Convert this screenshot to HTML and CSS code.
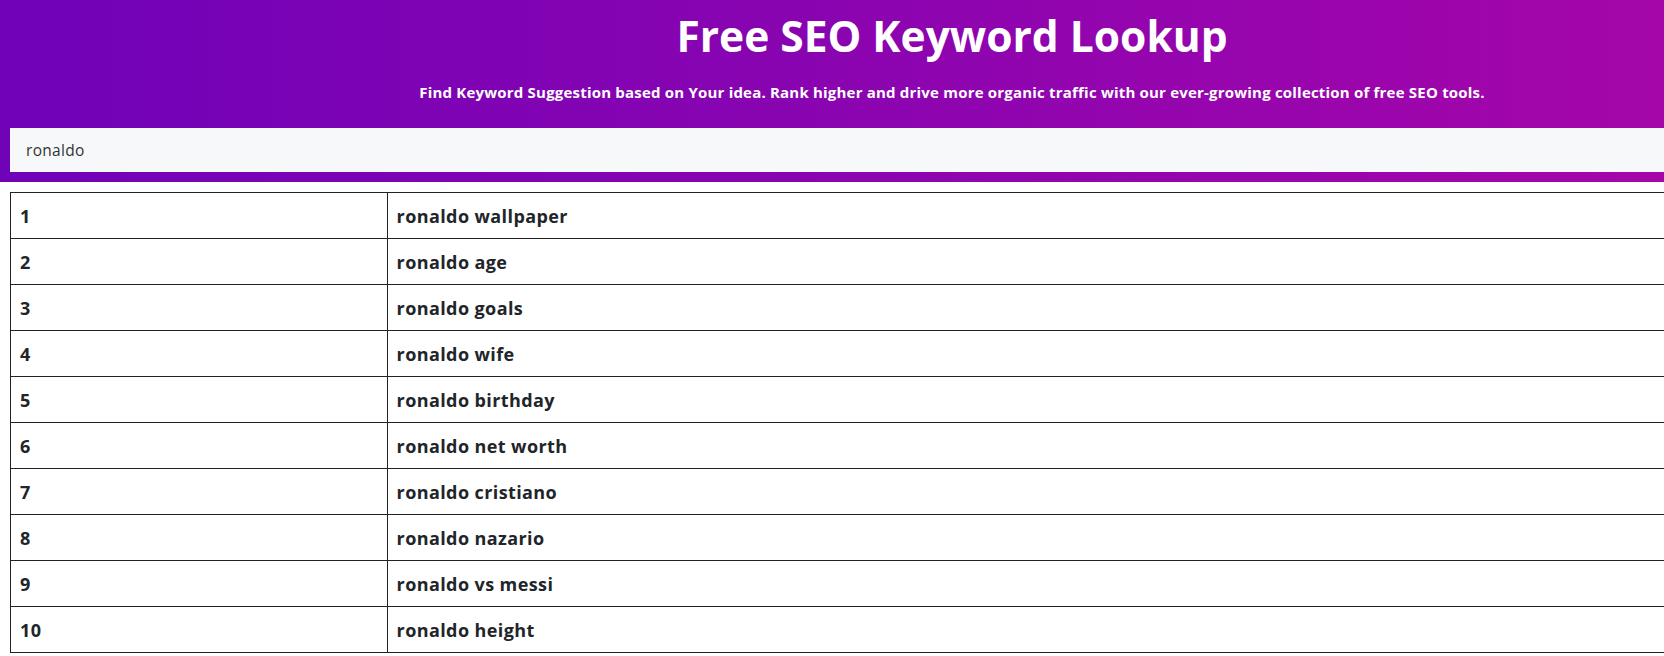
FILE: index.html
```html
<!DOCTYPE html>
<html lang="en">
<head>
<meta charset="utf-8">
<title>Free SEO Keyword Lookup</title>
<link rel="stylesheet" href="styles.css">
</head>
<body>
<div class="page">
  <header class="hero">
    <h1 class="hero-title">Free SEO Keyword Lookup</h1>
    <p class="hero-sub">Find Keyword Suggestion based on Your idea. Rank higher and drive more organic traffic with our ever-growing collection of free SEO tools.</p>
    <div class="search">
      <input class="search-input" type="text" value="ronaldo">
    </div>
  </header>
  <main class="results">
    <table class="kw-table">
      <tbody>
        <tr><td class="num">1</td><td class="kw">ronaldo wallpaper</td></tr>
        <tr><td class="num">2</td><td class="kw">ronaldo age</td></tr>
        <tr><td class="num">3</td><td class="kw">ronaldo goals</td></tr>
        <tr><td class="num">4</td><td class="kw">ronaldo wife</td></tr>
        <tr><td class="num">5</td><td class="kw">ronaldo birthday</td></tr>
        <tr><td class="num">6</td><td class="kw">ronaldo net worth</td></tr>
        <tr><td class="num">7</td><td class="kw">ronaldo cristiano</td></tr>
        <tr><td class="num">8</td><td class="kw">ronaldo nazario</td></tr>
        <tr><td class="num">9</td><td class="kw">ronaldo vs messi</td></tr>
        <tr><td class="num">10</td><td class="kw">ronaldo height</td></tr>
      </tbody>
    </table>
  </main>
</div>
</body>
</html>
```

FILE: styles.css
```css
* { box-sizing: border-box; }
html, body { margin: 0; padding: 0; background: #fff; }
body { font-family: "Open Sans", "DejaVu Sans", sans-serif; color: #212529; }
.page { width: 1904px; }
.hero {
  background: linear-gradient(90deg, #7002b8 0%, #a406a9 87%, #b008a8 100%);
  padding: 11px 10px 10px;
  text-align: center;
}
.hero-title {
  margin: 0;
  font-size: 42.5px;
  line-height: 50px;
  font-weight: 700;
  color: #fff;
}
.hero-sub {
  margin: 19px 0 0;
  font-size: 15px;
  line-height: 24px;
  letter-spacing: 0.2px;
  font-weight: 700;
  color: #fff;
}
.search { margin-top: 24px; }
.search-input {
  display: block;
  width: 100%;
  height: 44px;
  border: 0;
  outline: none;
  background: #f7f8fa;
  padding: 0 16px;
  font-family: "Open Sans", "DejaVu Sans", sans-serif;
  font-size: 15.5px;
  letter-spacing: 0.3px;
  color: #333;
}
.results { padding: 10px 10px; }
.kw-table {
  width: 100%;
  border-collapse: collapse;
}
.kw-table td {
  border: 1px solid #222;
  height: 46px;
  padding: 0 9px;
  font-size: 18px;
  letter-spacing: 0.4px;
  font-weight: 700;
  color: #212529;
}
.kw-table td.num { width: 20%; }
```
